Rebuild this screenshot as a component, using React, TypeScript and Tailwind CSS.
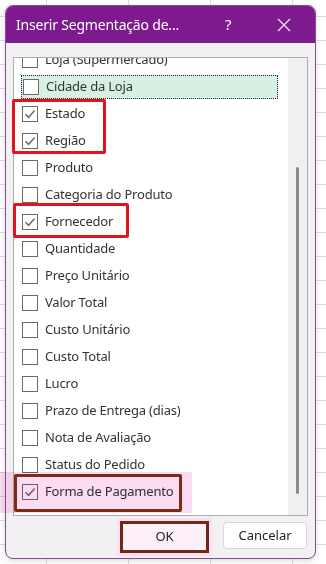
const rows = [
  { label: "Loja (Supermercado)", checked: false },
  { label: "Cidade da Loja", checked: false, focus: true },
  { label: "Estado", checked: true },
  { label: "Região", checked: true },
  { label: "Produto", checked: false },
  { label: "Categoria do Produto", checked: false },
  { label: "Fornecedor", checked: true },
  { label: "Quantidade", checked: false },
  { label: "Preço Unitário", checked: false },
  { label: "Valor Total", checked: false },
  { label: "Custo Unitário", checked: false },
  { label: "Custo Total", checked: false },
  { label: "Lucro", checked: false },
  { label: "Prazo de Entrega (dias)", checked: false },
  { label: "Nota de Avaliação", checked: false },
  { label: "Status do Pedido", checked: false },
  { label: "Forma de Pagamento", checked: true },
];

function CheckBox({ checked }: { checked: boolean }) {
  return (
    <div className="w-[16px] h-[16px] border border-[#6b6b6b] bg-white flex items-center justify-center shrink-0">
      {checked && (
        <svg width="12" height="12" viewBox="0 0 12 12" fill="none">
          <path d="M1.5 6.2 L4.6 9.3 L10.6 2.6" stroke="#6d6d6d" strokeWidth="1.5" />
        </svg>
      )}
    </div>
  );
}

export default function App() {
  return (
    <div
      className="relative w-[326px] h-[564px] overflow-hidden bg-white bg-[linear-gradient(#dcdcdc_1px,transparent_1px),linear-gradient(90deg,#dcdcdc_1px,transparent_1px)] bg-[size:100%_24px,82px_100%] bg-[position:0_16px,46px_0] pt-[5px] pl-[5px]"
      style={{ fontFamily: '"Noto Sans", "Open Sans", sans-serif' }}
    >
      {/* dialog window */}
      <div className="w-[311px] h-[554px] rounded-[8px] border border-[#8a4a94] bg-[#f3f0f4] flex flex-col overflow-hidden shadow-[0_2px_6px_rgba(0,0,0,0.15)]">
        <div className="h-[37px] bg-[#7d1b8e] flex items-center pl-[10px] text-white shrink-0">
          <span className="text-[14px] tracking-[-0.2px] flex-1">Inserir Segmentação de...</span>
          <span className="text-[15px] w-[20px] mr-[32px]">?</span>
          <svg width="14" height="14" viewBox="0 0 14 14" className="mr-[24px]">
            <path d="M1 1 L13 13 M13 1 L1 13" stroke="#f2dcf5" strokeWidth="1.4" />
          </svg>
        </div>

        <div className="flex-1 flex flex-col px-[7px] pt-[14px]">
          {/* list box */}
          <div className="h-[459px] border border-[#adadad] bg-white flex overflow-hidden">
            <div className="flex-1 overflow-hidden">
              <div className="-mt-[12px]">
                {rows.map((r) => (
                  <div key={r.label} className="h-[27px] flex items-center pl-[8px]">
                    <div
                      className={
                        r.focus
                          ? "flex items-center h-[24px] w-[257px] bg-[#d8f0e2] border border-dotted border-[#222] pl-[1px] -ml-[1px]"
                          : "flex items-center"
                      }
                    >
                      <CheckBox checked={r.checked} />
                      <span className="ml-[7px] text-[13px] tracking-[-0.2px] text-[#333]">{r.label}</span>
                    </div>
                  </div>
                ))}
              </div>
            </div>
            <div className="w-[19px] bg-[#f0eff1] flex justify-center pt-[109px]">
              <div className="w-[3px] h-[327px] bg-[#8a8a8a] rounded-full" />
            </div>
          </div>

          {/* buttons */}
          <div className="flex justify-end gap-[14px] mt-[6px] pr-[1px]">
            <button className="w-[89px] h-[32px] -mt-[1px] border-[3px] border-[#6e2a12] bg-[#fdf0fa] text-[13px] text-[#222] shadow-[0_0_0_3px_#fcdff3]">
              OK
            </button>
            <button className="w-[84px] h-[27px] rounded-[4px] border border-[#d6d6d6] bg-white text-[13px] text-[#222]">
              Cancelar
            </button>
          </div>
        </div>
      </div>

      {/* annotation boxes */}
      <div className="absolute left-[12px] top-[99px] w-[94px] h-[55px] border-[3px] border-[#e1131c] rounded-[2px]" />
      <div className="absolute left-[13px] top-[203px] w-[116px] h-[35px] border-[3px] border-[#e1131c] rounded-[2px]" />
      <div className="absolute left-0 top-[472px] w-[192px] h-[41px] bg-[#fcdcf2] mix-blend-multiply pointer-events-none" />
      <div className="absolute left-[14px] top-[474px] w-[168px] h-[38px] border-[3px] border-[#7a2c14] rounded-[2px]" />
    </div>
  );
}
